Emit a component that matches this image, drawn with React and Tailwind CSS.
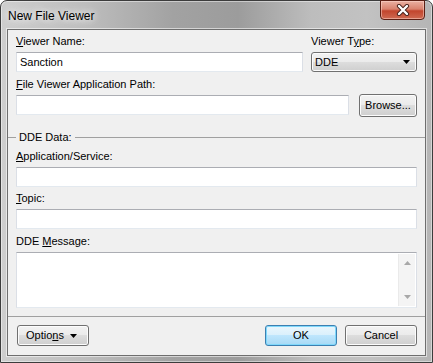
const font = { fontFamily: '"Liberation Sans", Arial, sans-serif' };

const btn =
  "flex items-center justify-center rounded-[3px] border border-[#707070] bg-[linear-gradient(to_bottom,#f2f2f2_0%,#ebebeb_50%,#dddddd_50%,#cfcfcf_100%)] shadow-[inset_0_0_0_1px_#fcfcfc] text-[11px] text-black";

const field =
  "bg-white border border-[#dbdfe6] border-t-[#abadb3] border-b-[#e3e9ef]";

const Label = ({ children, className = "" }) => (
  <div className={`h-[13px] leading-[13px] text-[11px] text-black ${className}`}>{children}</div>
);

const Separator = ({ label, className = "" }) => (
  <div className={`-mx-[8px] flex items-center h-[13px] ${className}`}>
    {label ? (
      <>
        <div className="w-[8px] h-px bg-[#a0a0a0]" />
        <span className="mx-[3px] text-[11px] leading-[13px] text-black">{label}</span>
      </>
    ) : null}
    <div className="flex-1 h-px bg-[#a0a0a0]" />
  </div>
);

const CloseButton = () => (
  <div className="absolute top-[-1px] right-[7px] w-[45px] h-[20px] rounded-b-[4px] border border-[#5b1f14] bg-[linear-gradient(to_bottom,#eab0a2_0%,#d9826e_45%,#c2452d_55%,#cf6a52_100%)] shadow-[inset_0_0_0_1px_rgba(255,220,210,0.5)] flex items-center justify-center">
    <svg width="14" height="12" viewBox="0 0 14 12">
      <path d="M3 2 L11 10 M11 2 L3 10" stroke="#47201a" strokeWidth="4.2" strokeLinecap="round" fill="none" />
      <path d="M3 2 L11 10 M11 2 L3 10" stroke="#ffffff" strokeWidth="2.4" strokeLinecap="round" fill="none" />
    </svg>
  </div>
);

const Caret = ({ color = "#000" }) => (
  <svg width="7" height="4" viewBox="0 0 7 4">
    <path d="M0 0 H7 L3.5 4 Z" fill={color} />
  </svg>
);

export default function App() {
  return (
    <div className="w-[433px] h-[363px] bg-white" style={font}>
      <div className="relative w-full h-full flex flex-col rounded-t-[7px] border border-[#3c3c3c] px-[6px] pb-[6px] bg-[linear-gradient(to_right,#cecece_0%,#bdbdbd_20%,#a2a2a2_40%,#9c9c9c_55%,#bdbdbd_72%,#c2c2c2_85%,#b5b5b5_100%)] shadow-[inset_0_0_0_1px_rgba(255,255,255,0.45)]">
        <div className="h-[28px] flex items-center pl-[1px] pt-[1px]">
          <span className="text-[12px] text-black [text-shadow:0_0_6px_#f4f4f4,0_0_10px_#ececec]">New File Viewer</span>
        </div>
        <CloseButton />

        <div className="flex-1 flex flex-col border border-[#6e6e6e] bg-[#f0f0f0] px-[8px] pt-[5px] shadow-[0_0_0_1px_rgba(255,255,255,0.55)]">
          <div className="flex gap-[8px]">
            <div className="flex-1 flex flex-col">
              <Label className="mb-[4px]">
                <u>V</u>iewer Name:
              </Label>
              <div className={`h-[20px] flex items-center pl-[3px] text-[11px] text-black ${field}`}>Sanction</div>
            </div>
            <div className="w-[106px] flex flex-col">
              <Label className="mb-[4px]">
                Viewer T<u>y</u>pe:
              </Label>
              <div className={`${btn} h-[20px] !justify-between pl-[3px] pr-[6px]`}>
                <span>DDE</span>
                <Caret />
              </div>
            </div>
          </div>

          <Label className="mt-[6px] mb-[3px]">
            <u>F</u>ile Viewer Application Path:
          </Label>
          <div className="flex gap-[10px] h-[23px]">
            <div className={`flex-1 h-[20px] mt-[1px] ${field}`} />
            <div className={`${btn} w-[58px] h-[23px]`}>Browse...</div>
          </div>

          <Separator label="DDE Data:" className="mt-[14px]" />

          <Label className="mt-[6px] mb-[4px]">
            <u>A</u>pplication/Service:
          </Label>
          <div className={`h-[20px] ${field}`} />

          <Label className="mt-[5px] mb-[4px]">
            <u>T</u>opic:
          </Label>
          <div className={`h-[20px] ${field}`} />

          <Label className="mt-[6px] mb-[4px]">
            DDE <u>M</u>essage:
          </Label>
          <div className={`h-[56px] flex justify-end p-px ${field}`}>
            <div className="w-[17px] h-full bg-[#f4f4f4] border-l border-[#eaeaea] flex flex-col items-center justify-between py-[7px]">
              <svg width="7" height="4" viewBox="0 0 7 4">
                <path d="M0 4 H7 L3.5 0 Z" fill="#a8a8a8" />
              </svg>
              <Caret color="#a8a8a8" />
            </div>
          </div>

          <div className="-mx-[8px] mt-[8px] h-px bg-[#a0a0a0]" />

          <div className="mt-[8px] flex items-center">
            <div className={`${btn} w-[72px] h-[21px] ml-[1px] !justify-start pl-[8px] gap-[6px]`}>
              <span>
                Optio<u>n</u>s
              </span>
              <Caret />
            </div>
            <div className="flex-1" />
            <div className="w-[72px] h-[21px] flex items-center justify-center rounded-[3px] border border-[#3c7fb1] bg-[linear-gradient(to_bottom,#eaf6fd_0%,#d9f0fc_50%,#bee6fd_50%,#a7d9f5_100%)] shadow-[inset_0_0_0_1px_#7fd8fb] text-[11px] text-black">
              OK
            </div>
            <div className={`${btn} w-[72px] h-[21px] ml-[8px]`}>Cancel</div>
          </div>
        </div>
      </div>
    </div>
  );
}
